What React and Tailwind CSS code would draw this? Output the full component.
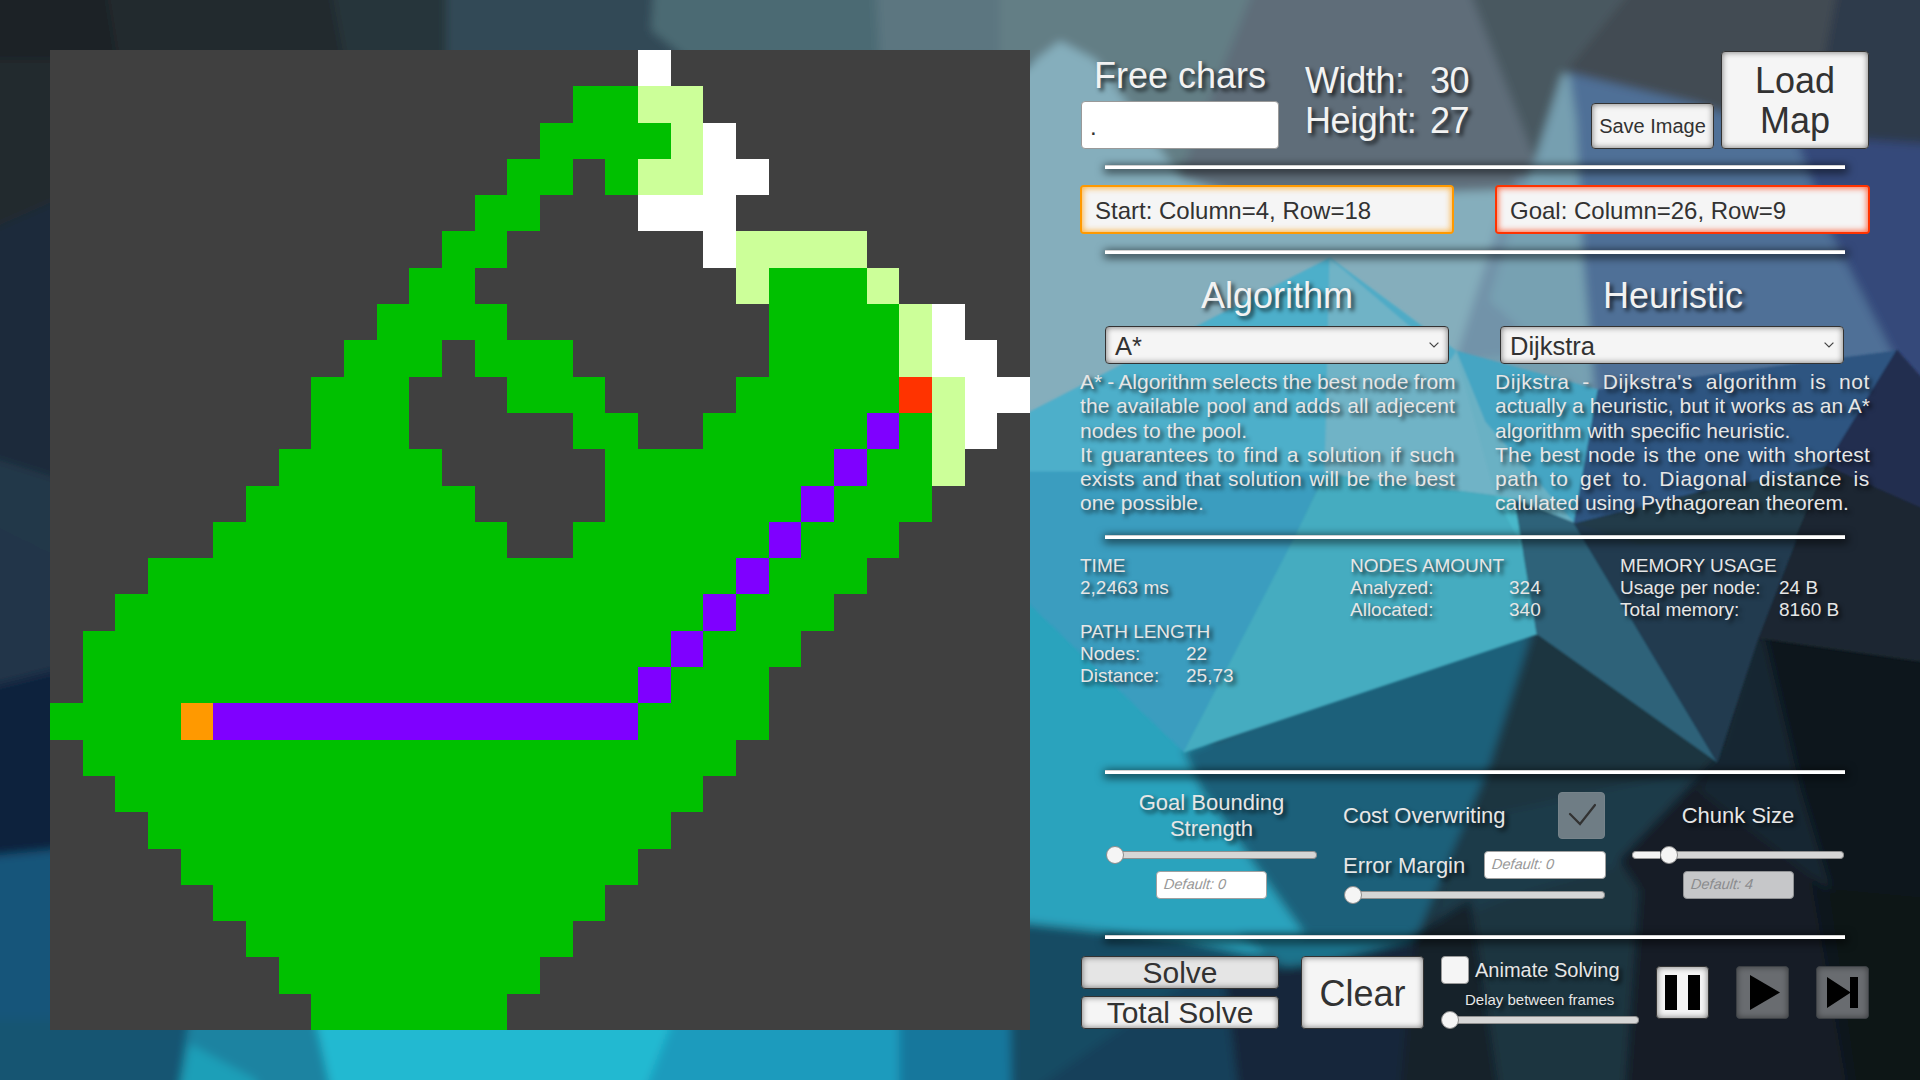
import React from "react";

const COLORS = {
  g: "#00c000",
  l: "#ccff99",
  w: "#ffffff",
  p: "#7f00ff",
  o: "#ff9900",
  r: "#ff3300",
};

// Each row is a list of runs: [cell kind, first column, last column].
const ROWS = [
  [["w", 18, 18]],
  [["g", 16, 17], ["l", 18, 19]],
  [["g", 15, 18], ["l", 19, 19], ["w", 20, 20]],
  [["g", 14, 15], ["g", 17, 17], ["l", 18, 19], ["w", 20, 21]],
  [["g", 13, 14], ["w", 18, 20]],
  [["g", 12, 13], ["w", 20, 20], ["l", 21, 24]],
  [["g", 11, 12], ["l", 21, 21], ["g", 22, 24], ["l", 25, 25]],
  [["g", 10, 13], ["g", 22, 25], ["l", 26, 26], ["w", 27, 27]],
  [["g", 9, 11], ["g", 13, 15], ["g", 22, 25], ["l", 26, 26], ["w", 27, 28]],
  [["g", 8, 10], ["g", 14, 16], ["g", 21, 25], ["r", 26, 26], ["l", 27, 27], ["w", 28, 29]],
  [["g", 8, 10], ["g", 16, 17], ["g", 20, 24], ["p", 25, 25], ["g", 26, 26], ["l", 27, 27], ["w", 28, 28]],
  [["g", 7, 11], ["g", 17, 23], ["p", 24, 24], ["g", 25, 26], ["l", 27, 27]],
  [["g", 6, 12], ["g", 17, 22], ["p", 23, 23], ["g", 24, 26]],
  [["g", 5, 13], ["g", 16, 21], ["p", 22, 22], ["g", 23, 25]],
  [["g", 3, 20], ["p", 21, 21], ["g", 22, 24]],
  [["g", 2, 19], ["p", 20, 20], ["g", 21, 23]],
  [["g", 1, 18], ["p", 19, 19], ["g", 20, 22]],
  [["g", 1, 17], ["p", 18, 18], ["g", 19, 21]],
  [["g", 0, 3], ["o", 4, 4], ["p", 5, 17], ["g", 18, 21]],
  [["g", 1, 20]],
  [["g", 2, 19]],
  [["g", 3, 18]],
  [["g", 4, 17]],
  [["g", 5, 16]],
  [["g", 6, 15]],
  [["g", 7, 14]],
  [["g", 8, 13]],
];

function MapGrid() {
  return (
    <div className="grid h-[980px] w-[980px] shrink-0 grid-cols-[repeat(30,minmax(0,1fr))] grid-rows-[repeat(27,minmax(0,1fr))] bg-[#404040]">
      {ROWS.flatMap((runs, y) =>
        runs.map(([kind, from, to]) => (
          <div
            key={`${y}-${from}`}
            style={{ gridRow: y + 1, gridColumn: `${from + 1} / ${to + 2}`, backgroundColor: COLORS[kind] }}
          />
        ))
      )}
    </div>
  );
}

const SOFT = [
  // top strip
  ["-20,-20 105,-20 118,60 -20,300", "#1b2225"],
  ["105,-20 330,-20 345,60 118,60", "#212b2f"],
  ["330,-20 447,-20 447,60 345,60", "#27343a"],
  ["447,-20 655,-20 652,30 690,60 447,60", "#324a56"],
  ["655,-20 878,-20 882,60 690,60 652,30", "#4b6a73"],
  ["876,-20 1040,-20 1070,60 880,60", "#5b7680"],
  // left strip
  ["-20,60 60,60 60,210 -20,235", "#20292e"],
  ["-20,235 60,200 60,480 -20,455", "#1c2b3b"],
  ["-20,455 60,480 60,650 -20,520", "#24384a"],
  ["-20,520 60,560 60,700 -20,690", "#22344a"],
  ["-20,690 60,670 60,850 -20,860", "#11233c"],
  ["-20,858 60,850 60,1100 -20,1100", "#15547a"],
  // bottom strip
  ["-20,1020 190,1020 180,1100 -20,1100", "#155472"],
  ["190,1020 318,1020 334,1100 178,1100", "#1c83a1"],
  ["190,1045 255,1080 262,1100 178,1100", "#1f9fb8"],
  ["316,1020 676,1020 644,1100 334,1100", "#23b9d1"],
  ["674,1020 902,1020 902,1100 642,1100", "#1a9bbd"],
  ["900,1020 1018,1020 1014,1100 900,1100", "#17779c"],
  // right part, top row
  ["1000,-20 1270,-20 1200,185 1150,190 1060,42 1000,80", "#647e85"],
  ["1258,-20 1466,-20 1545,165 1510,195 1250,215 1175,190", "#5e6d79"],
  ["1466,-20 1660,-20 1660,30 1563,80 1540,170", "#4a5961"],
  ["1640,-20 1850,-20 1840,150 1690,120 1563,76", "#434c53"],
  ["1840,-20 1940,-20 1940,150 1800,138 1825,60", "#2d3a4b"],
  ["1060,42 1095,60 1180,178 1250,200 1510,190 1500,400 1300,400 1010,480 1010,80", "#85aebc"],
  ["1563,74 1590,80 1620,345 1620,420 1456,380 1530,178", "#769fb0"],
  ["1500,220 1456,360 1590,345 1520,175", "#7293a9"],
  ["1583,190 1530,170 1490,300 1590,390", "#77a1b2"],
  ["1570,74 1695,104 1800,140 1910,370 1597,410 1583,250 1577,120", "#4f7097"],
  ["1796,136 1940,146 1940,410 1897,360 1830,230", "#34487a"],
  // lower part
  ["1010,560 1100,620 1210,740 1330,962 1010,925", "#2ba3bd"],
  ["1537,610 1184,751 1202,790 1320,955 1430,950 1492,765", "#1f607a"],
  ["1537,620 1720,750 1640,930 1632,1100 1400,1100 1420,930 1490,765", "#1b3441"],
  ["1630,785 1700,770 1635,860 1500,900 1430,930 1470,820", "#1c3a49"],
  ["1717,758 1758,620 1800,700 1850,1100 1625,1100 1640,890 1620,860", "#131c27"],
  ["1758,620 1940,640 1940,1100 1850,1100 1793,770", "#10141c"],
  ["1755,630 1762,630 1800,790 1830,890 1700,790 1717,758", "#182632"],
  ["1830,890 1940,900 1940,1100 1860,1100", "#0f1316"],
  ["1010,922 1180,940 1300,965 1240,1100 1012,1100", "#194b64"],
  ["1020,1100 1220,960 1240,1010 1250,1100", "#17405a"],
  ["1240,935 1430,935 1340,975 1300,975", "#1f738c"],
  ["1225,975 1330,962 1430,935 1405,1100 1240,1100", "#16263a"],
  ["1415,935 1470,900 1500,1100 1400,1100", "#18222b"],
];

const SHARP = [
  ["1330,258 1030,412 1020,472 1325,474", "#4eafca"],
  ["1330,258 1456,351 1500,496 1325,474", "#6fb3c6"],
  ["1330,258 1420,325 1456,351 1450,360", "#4fabc6"],
  ["1015,472 1325,472 1296,535 1184,752 1015,590", "#3b9dbf"],
  ["1325,474 1496,496 1521,540 1537,634 1184,752 1296,535", "#45acc0"],
  ["1456,351 1598,390 1574,523 1485,430", "#44a5c3"],
  ["1456,351 1485,422 1574,523 1518,500 1496,496", "#6bb1c4"],
  ["1496,496 1518,500 1524,555 1519,540", "#49b8ca"],
  ["1598,390 1897,351 1840,460 1700,510 1574,524", "#2e5581"],
  ["1574,524 1700,492 1830,466 1795,545 1640,545", "#213a48"],
  ["1897,350 1925,382 1925,515 1826,466", "#222e50"],
  ["1826,466 1925,510 1925,662 1758,638 1795,540", "#1c2730"],
  ["1515,500 1574,523 1584,540 1717,762 1537,634", "#2d6279"],
  ["1574,523 1640,545 1796,540 1758,638 1717,762", "#213b50"],
];

function Backdrop() {
  return (
    <svg className="absolute inset-0 h-full w-full" viewBox="0 0 1920 1080" preserveAspectRatio="none" aria-hidden="true">
      <defs>
        <filter id="soft" x="-2%" y="-2%" width="104%" height="104%">
          <feGaussianBlur stdDeviation="5" />
        </filter>
        <filter id="crisp">
          <feGaussianBlur stdDeviation="1" />
        </filter>
      </defs>
      <rect width="1920" height="1080" fill="#1b2c38" />
      <g filter="url(#soft)">
        {SOFT.map(([points, fill]) => (
          <polygon key={points} points={points} fill={fill} stroke={fill} strokeWidth="1.5" />
        ))}
      </g>
      <g filter="url(#crisp)">
        {SHARP.map(([points, fill]) => (
          <polygon key={points} points={points} fill={fill} stroke={fill} strokeWidth="1" />
        ))}
      </g>
    </svg>
  );
}

const shadow = "[text-shadow:3px_3px_4px_rgba(0,0,0,0.75)]";
const bevel = "rounded-[4px] border border-[#333] bg-[#f5f5f5] text-[#323232] shadow-[inset_0_0_6px_rgba(0,0,0,0.55)]";
const disabledBevel = "rounded-[4px] border border-[#3c4044] bg-[#696c70] text-black shadow-[inset_0_0_6px_rgba(0,0,0,0.45)]";

function Rule() {
  return <div className="mx-[25px] h-1 shrink-0 border-t border-[#d0d0d0] bg-white shadow-[1px_2px_8px_2px_rgba(0,0,0,0.6)]" />;
}

function Slider({ className, value = 0 }) {
  return (
    <div className={`flex h-[18px] items-center ${className}`}>
      {value > 0 && (
        <div className="h-2 rounded-l-full border border-r-0 border-[#999] bg-[#f5f5f5]" style={{ width: value }} />
      )}
      <div className="relative z-10 -mr-1 size-[18px] shrink-0 rounded-full border border-[#8c8c8c] bg-[#f5f5f5]" />
      <div className="h-2 grow rounded-r-full border border-l-0 border-[#8f8f8f] bg-[#d6d6d6]" />
    </div>
  );
}

function SmallInput({ className, text, disabled }) {
  return (
    <div
      className={`flex h-7 items-center rounded-[4px] border px-[7px] text-[14.5px] ${
        disabled ? "border-[#909294] bg-[#c6c7c9] text-[#8b8c8e]" : "border-[#a0a0a0] bg-white text-[#989898]"
      } ${className}`}
    >
      <span className="-skew-x-6 italic">{text}</span>
    </div>
  );
}

function Select({ className, children }) {
  return (
    <div className={`flex h-[38px] items-center justify-between pr-[9px] pl-[9px] text-[25.5px] ${bevel} ${className}`}>
      <span className="pt-px leading-9">{children}</span>
      <svg className="h-[6px] w-[10px]" viewBox="0 0 10 6" fill="none" stroke="#444" strokeWidth="1.2">
        <path d="M0.6 0.6 L5 5 L9.4 0.6" />
      </svg>
    </div>
  );
}

function Description({ lines }) {
  return (
    <div className={`w-[375px] text-[21px] leading-[24.25px] whitespace-nowrap text-[#e6e6e6] ${shadow}`}>
      {lines.map(([text, spacing, word, last]) => (
        <div
          key={text}
          className={last ? "" : "[text-align-last:justify]"}
          style={{ letterSpacing: spacing || "normal", wordSpacing: word }}
        >
          {text}
        </div>
      ))}
    </div>
  );
}

const ALGORITHM_TEXT = [
  ["A* - Algorithm selects the best node from", 0, -0.7],
  ["the available pool and adds all adjecent", 0.07, 0],
  ["nodes to the pool.", 0, 0, true],
  ["It guarantees to find a solution if such", 0.27, 0],
  ["exists and that solution will be the best", 0.17, 0],
  ["one possible.", 0, 0, true],
];

const HEURISTIC_TEXT = [
  ["Dijkstra - Dijkstra's algorithm is not", 0.57, 0],
  ["actually a heuristic, but it works as an A*", 0, -0.3],
  ["algorithm with specific heuristic.", 0, 0, true],
  ["The best node is the one with shortest", 0.2, 0],
  ["path to get to. Diagonal distance is", 0.65, 0],
  ["calulated using Pythagorean theorem.", 0, 0, true],
];

function Stat({ title, rows, labels }) {
  return (
    <div>
      <div>{title}</div>
      {rows.map(([k, v]) => (
        <div key={k} className="flex">
          <span className={labels}>{k}</span>
          <span>{v}</span>
        </div>
      ))}
    </div>
  );
}

export default function App() {
  return (
    <div className="relative h-[1080px] w-[1920px] overflow-hidden font-['Liberation_Sans',Arial,sans-serif]">
      <Backdrop />
      <div className="relative flex h-full pt-[50px] pl-[50px]">
        <MapGrid />
        <div className="ml-[50px] flex w-[790px] flex-col text-[#f2f2f2]">
          <div className="flex h-[100px]">
            <div className="ml-px w-[198px]">
              <div className={`h-[51px] text-center text-[36px] leading-[52px] ${shadow}`}>Free chars</div>
              <div className="flex h-12 items-center rounded-[4px] border border-[#999] bg-white pt-1 pl-2 text-[24px] text-[#323232]">
                .
              </div>
            </div>
            <div className={`mt-[11px] ml-[26px] grid h-20 grid-cols-[125px_auto] text-[36px] leading-10 tracking-[-0.4px] ${shadow}`}>
              <span>Width:</span>
              <span>30</span>
              <span>Height:</span>
              <span>27</span>
            </div>
            <div className="mr-px ml-auto flex items-end gap-[7px] pb-[1px]">
              <div className={`flex h-[46px] w-[123px] items-center justify-center text-[20px] ${bevel}`}>Save Image</div>
              <div className={`flex h-[98px] w-[148px] items-center justify-center pt-[2px] text-center text-[36px] leading-10 ${bevel}`}>
                Load
                <br />
                Map
              </div>
            </div>
          </div>
          <div className="h-[15px] shrink-0" />
          <Rule />
          <div className="mt-4 mb-4 flex h-[49px] shrink-0 justify-between text-[24px] text-[#323232]">
            <div className="flex w-[374px] items-center rounded-[4px] border-2 border-[#ff9900] bg-[#f5f5f5] pt-[2px] pl-[13px] shadow-[inset_0_0_6px_1px_rgba(255,153,0,0.75)]">
              Start: Column=4, Row=18
            </div>
            <div className="flex w-[375px] items-center rounded-[4px] border-2 border-[#ff3300] bg-[#f5f5f5] pt-[2px] pl-[13px] shadow-[inset_0_0_6px_1px_rgba(255,51,0,0.75)]">
              Goal: Column=26, Row=9
            </div>
          </div>
          <Rule />
          <div className="flex h-[281px] shrink-0 justify-between pt-[15px]">
            <div className="w-[375px]">
              <div className={`ml-[25px] h-[57px] w-[344px] text-center text-[36px] leading-[53px] ${shadow}`}>Algorithm</div>
              <Select className="ml-[25px] w-[344px]">A*</Select>
              <div className="h-[6px]" />
              <Description lines={ALGORITHM_TEXT} />
            </div>
            <div className="w-[375px]">
              <div className={`ml-[6px] h-[57px] w-[344px] text-center text-[36px] leading-[53px] ${shadow}`}>Heuristic</div>
              <Select className="ml-[5px] w-[344px]">Dijkstra</Select>
              <div className="h-[6px]" />
              <Description lines={HEURISTIC_TEXT} />
            </div>
          </div>
          <Rule />
          <div className={`grid h-[231px] shrink-0 grid-cols-[270px_270px_250px] pt-4 text-[19px] leading-[22px] text-[#e6e6e6] ${shadow}`}>
            <div className="flex flex-col gap-[22px]">
              <div>
                <div>TIME</div>
                <div>2,2463 ms</div>
              </div>
              <Stat title="PATH LENGTH" labels="w-[106px]" rows={[["Nodes:", "22"], ["Distance:", "25,73"]]} />
            </div>
            <Stat title="NODES AMOUNT" labels="w-[159px]" rows={[["Analyzed:", "324"], ["Allocated:", "340"]]} />
            <Stat title="MEMORY USAGE" labels="w-[159px]" rows={[["Usage per node:", "24 B"], ["Total memory:", "8160 B"]]} />
          </div>
          <Rule />
          <div className="flex h-[161px] shrink-0 pl-[26px] text-[22px] text-[#e6e6e6]">
            <div className="flex w-[211px] flex-col items-center pt-4">
              <div className={`h-14 text-center leading-[25.5px] ${shadow}`}>
                Goal Bounding
                <br />
                Strength
              </div>
              <Slider className="w-full" />
              <SmallInput className="mt-[7px] w-[111px]" text="Default: 0" />
            </div>
            <div className="ml-[26px] w-[262px] pt-[17px]">
              <div className="flex h-12 items-center justify-between">
                <span className={shadow}>Cost Overwriting</span>
                <div className="flex size-[47px] items-center justify-center rounded-[4px] border border-[#76838a] bg-[#6f7d85]">
                  <svg className="size-[28px]" viewBox="0 0 28 28" fill="none" stroke="#323232" strokeWidth="2.2" strokeLinecap="round">
                    <path d="M2 13 L12 23 L27 4" />
                  </svg>
                </div>
              </div>
              <div className="mt-3 flex h-7 items-center justify-between">
                <span className={shadow}>Error Margin</span>
                <SmallInput className="-mr-px w-[122px]" text="Default: 0" />
              </div>
              <Slider className="mt-[7px] ml-px" />
            </div>
            <div className="ml-[27px] flex w-[212px] flex-col items-center pt-4">
              <div className={`h-14 leading-[51px] ${shadow}`}>Chunk Size</div>
              <Slider className="w-full" value={28} />
              <SmallInput className="mt-[7px] w-[111px]" text="Default: 4" disabled />
            </div>
          </div>
          <Rule />
          <div className="flex h-[100px] shrink-0 pt-[17px] pl-px">
            <div className="flex w-[198px] flex-col gap-[7px] text-[30px]">
              <div className="flex h-[33px] items-center justify-center rounded-[4px] border border-[#333] bg-[#e5e5e5] leading-8 text-[#323232] shadow-[inset_0_0_6px_rgba(0,0,0,0.55)]">
                Solve
              </div>
              <div className={`flex h-[33px] items-center justify-center leading-8 ${bevel}`}>Total Solve</div>
            </div>
            <div className={`ml-[22px] flex h-[73px] w-[123px] items-center justify-center pt-[2px] text-[36px] ${bevel}`}>Clear</div>
            <div className="ml-[17px] w-[198px]">
              <div className="flex items-center gap-[6px]">
                <div className="size-7 rounded-[4px] border border-[#999] bg-[#f5f5f5]" />
                <span className={`text-[20px] leading-7 text-[#e6e6e6] ${shadow}`}>Animate Solving</span>
              </div>
              <div className={`ml-[24px] h-[27px] text-[15px] leading-8 text-[#e6e6e6] ${shadow}`}>Delay between frames</div>
              <Slider />
            </div>
            <div className="mt-[10px] ml-[17px] flex gap-[27px]">
              <div className={`size-[53px] ${bevel}`}>
                <svg viewBox="1 1 51 51" className="h-full w-full">
                  <path d="M9 9h12v35H9zM32 9h12v35H32z" fill="#000" />
                </svg>
              </div>
              <div className={`size-[53px] ${disabledBevel}`}>
                <svg viewBox="1 1 51 51" className="h-full w-full">
                  <path d="M14 9L44 26.500L14 44z" fill="#000" />
                </svg>
              </div>
              <div className={`size-[53px] ${disabledBevel}`}>
                <svg viewBox="1 1 51 51" className="h-full w-full">
                  <path d="M11 11L34 26V11h8v31h-8V27L11 42z" fill="#000" />
                </svg>
              </div>
            </div>
          </div>
        </div>
      </div>
    </div>
  );
}
